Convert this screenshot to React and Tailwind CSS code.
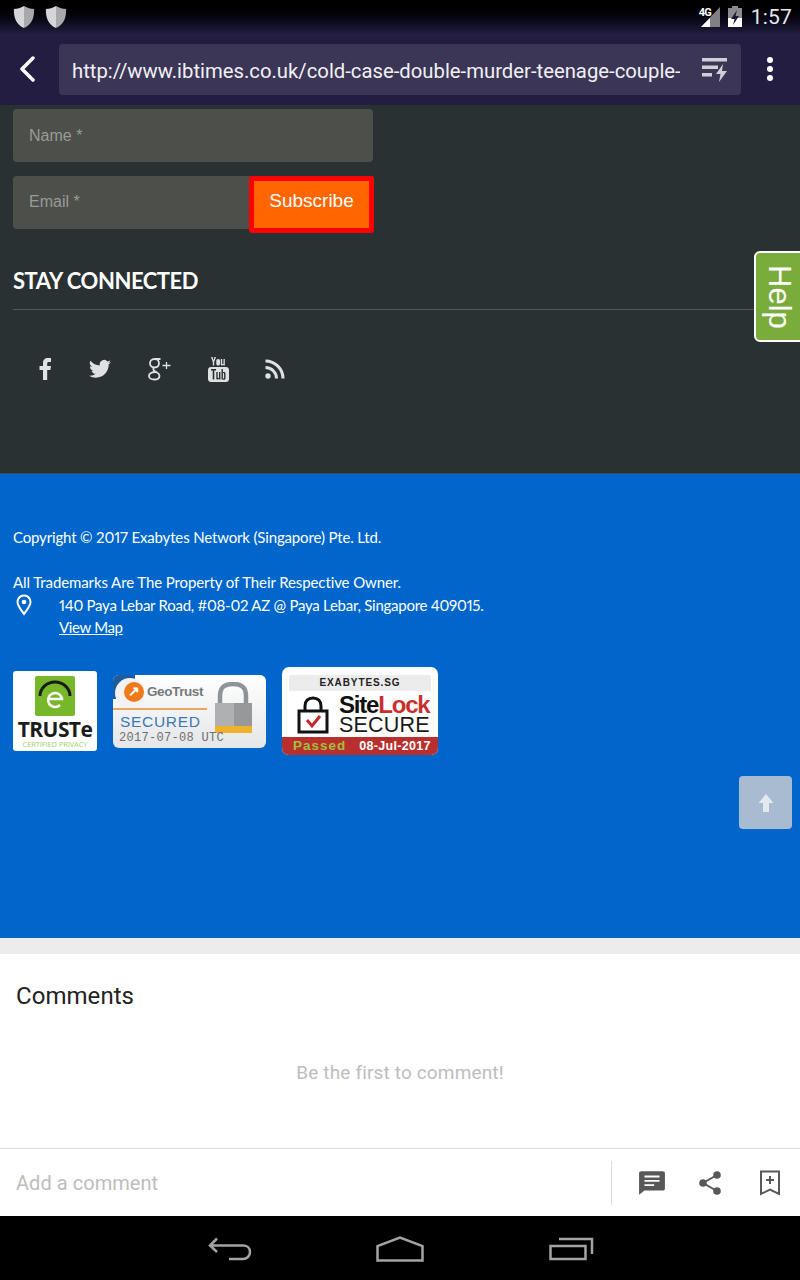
import React from "react";

const Shield = () => (
  <svg width="22" height="24" viewBox="0 0 24 24" preserveAspectRatio="none">
    <path d="M12 1 C8 3 5 4 1 4 C0.500 13 4 20 12 23 Z" fill="#d6d6d8" />
    <path d="M12 1 C16 3 19 4 23 4 C23.500 13 20 20 12 23 Z" fill="#a9a9ad" />
  </svg>
);

const Social = () => (
  <div className="flex items-center h-[40px] ml-[25px] text-[#dfe1e2]">
    <svg width="16" height="24" viewBox="0 0 16 24" className="mr-[35px]">
      <path fill="currentColor" d="M5 23 V13 H1.500 V9 H5 V6 C5 2.500 7 1 9.800 1 H13 V5 H11 C9.500 5 9.200 5.600 9.200 6.800 V9 H13 L12.400 13 H9.200 V23 Z" />
    </svg>
    <svg width="22" height="20" viewBox="0 0 24 20" className="mr-[37px]">
      <path fill="currentColor" d="M24 2.400 a9.800 9.800 0 0 1-2.800.8 4.900 4.900 0 0 0 2.100-2.700 9.800 9.800 0 0 1-3.100 1.200 4.900 4.900 0 0 0-8.400 4.500 A14 14 0 0 1 1.700 1 4.900 4.900 0 0 0 3.200 7.600 4.900 4.900 0 0 1 1 7 a4.900 4.900 0 0 0 3.900 4.800 4.900 4.900 0 0 1-2.200.1 4.900 4.900 0 0 0 4.600 3.400 A9.900 9.900 0 0 1 0 17.300 14 14 0 0 0 7.500 19.500 c9.100 0 14.300-7.700 14-14.600 A10 10 0 0 0 24 2.400 z" />
    </svg>
    <svg width="23" height="24" viewBox="0 0 23 24" className="mr-[37px]">
      <path fill="none" stroke="currentColor" strokeWidth="1.800" d="M12.500 2 H6.500 C3.500 2 2 4.200 2 6.300 C2 8.600 3.800 10.500 6.500 10.500 C9.300 10.500 11 8.600 11 6.300 C11 4.200 9.500 2 7 2 M6 10.500 C4.800 12 5.200 13 6.500 14 C9 15.800 11.500 16.200 11.500 18.700 C11.500 21 9.300 22.500 6.300 22.500 C3.200 22.500 1 21 1 19 C1 16.500 4 15 7.500 15" />
      <path fill="none" stroke="currentColor" strokeWidth="1.300" d="M14.500 8.500 H22.500 M18.500 5 V12" />
    </svg>
    <svg width="21" height="25" viewBox="0 0 21 25" className="mr-[36px]">
      <path fill="currentColor" fillRule="evenodd" d="M3 10 H18 C19.700 10 21 11.300 21 13 V22 C21 23.700 19.700 25 18 25 H3 C1.300 25 0 23.700 0 22 V13 C0 11.300 1.300 10 3 10 Z M3 12 V13.500 H4.700 V22.500 H6.300 V13.500 H8 V12 Z M8.300 15 V21.500 C8.300 22.800 10 22.900 11 21.800 V22.500 H12.400 V15 H11 V20.500 C10.500 21.200 9.700 21.200 9.700 20.500 V15 Z M13.500 12 V22.500 H14.900 C16 23.200 17.500 22.800 17.500 21 V16.500 C17.500 14.800 16 14.500 14.900 15.300 V12 Z M14.900 16.300 C15.500 15.900 16.100 16 16.100 16.800 V20.800 C16.100 21.600 15.500 21.800 14.900 21.400 Z" />
      <path fill="currentColor" d="M3 0 H4.600 L5.500 3.500 L6.400 0 H8 L6.200 5 V8.500 H4.800 V5 Z M10.200 2 C8.900 2 8.300 2.800 8.300 3.800 V6.800 C8.300 7.900 9 8.600 10.200 8.600 C11.400 8.600 12 7.900 12 6.800 V3.800 C12 2.800 11.400 2 10.200 2 Z M12.800 2 V7.300 C12.800 8.800 14.400 8.900 15.500 7.700 V8.500 H16.800 V2 H15.500 V6.700 C15 7.300 14.200 7.300 14.200 6.700 V2 Z" />
    </svg>
    <svg width="20" height="20" viewBox="0 0 20 20">
      <circle cx="3" cy="17" r="2.700" fill="currentColor" />
      <path fill="none" stroke="currentColor" strokeWidth="3" d="M0.500 8.500 A11 11 0 0 1 11.500 19.500" />
      <path fill="none" stroke="currentColor" strokeWidth="3" d="M0.500 2 A17.500 17.500 0 0 1 18 19.500" />
    </svg>
  </div>
);

const Truste = () => (
  <div className="w-[84px] h-[80px] mt-[4px] bg-white rounded-[3px] flex flex-col items-center pt-[5px] overflow-hidden">
    <svg width="40" height="40" viewBox="0 0 40 40" className="shrink-0">
      <rect width="40" height="40" rx="2" fill="#77b82a" />
      <path d="M5 20 A15 14 0 0 1 35 20" fill="none" stroke="#1b1b1b" strokeWidth="3" />
      <path d="M14 23 H27 A7 7 0 1 0 25 29" fill="none" stroke="#fff" strokeWidth="2.500" />
    </svg>
    <div className="font-['Open_Sans'] font-bold text-[21px] leading-[21px] tracking-[-0.6px] text-[#1c1c1c] mt-[3px]">TRUSTe</div>
    <div className="font-['Open_Sans'] text-[7.500px] leading-[9px] text-[#a5cf6a] whitespace-nowrap">CERTIFIED PRIVACY</div>
  </div>
);

const GeoTrust = () => (
  <div className="relative w-[153px] h-[73px] mt-[8px] ml-[16px] bg-gradient-to-b from-[#ffffff] to-[#e4e6e8] rounded-[6px] overflow-hidden">
    <div className="absolute left-0 top-0 w-[22px] h-[24px] bg-[#1f5c9e] rounded-br-[20px]" />
    <div className="absolute left-[2px] top-[3px] w-[30px] h-[30px] rounded-full bg-[#f1f2f3]" />
    <div className="absolute left-[11px] top-[7px] w-[20px] h-[20px] rounded-full bg-[#ef7a1a] text-white text-[14px] leading-[19px] text-center font-bold font-['Liberation_Sans']">↗</div>
    <div className="absolute left-[34px] top-[9px] font-['Liberation_Sans'] font-bold text-[13.500px] leading-[16px] tracking-[-0.4px] text-[#77797c]">GeoTrust</div>
    <div className="absolute left-0 top-[33px] w-[94px] h-[2px] bg-[#f2a45c]" />
    <div className="absolute left-[7px] top-[37px] font-['Liberation_Sans'] text-[15.500px] leading-[19px] tracking-[0.7px] text-[#3d78b4]">SECURED</div>
    <svg width="40" height="52" viewBox="0 0 40 52" className="absolute left-[101px] top-[7px]">
      <path d="M6 24 V14 C6 5 11 2 19 2 C27 2 32 5 32 14 V24" fill="none" stroke="#8f9498" strokeWidth="4.500" />
      <rect x="1" y="21" width="37" height="30" fill="#aeb0b2" />
      <rect x="20" y="21" width="18" height="30" fill="#96989a" />
      <rect x="1" y="44" width="37" height="7" fill="#f0b22c" />
    </svg>
    <div className="absolute left-[6px] top-[56px] font-['Liberation_Mono'] text-[12px] leading-[14px] tracking-[0.3px] text-[#6d6f72] whitespace-nowrap">2017-07-08 UTC</div>
  </div>
);

const SiteLock = () => (
  <div className="relative w-[156px] h-[88px] ml-[16px] bg-white rounded-[7px] overflow-hidden">
    <div className="absolute left-[7px] top-[8px] w-[142px] h-[16px] bg-[#ececec] text-center font-['Liberation_Sans'] font-bold text-[10px] leading-[16px] tracking-[0.9px] text-[#222]">EXABYTES.SG</div>
    <svg width="32" height="38" viewBox="0 0 32 38" className="absolute left-[15px] top-[29px]">
      <path d="M8 15 V10 C8 5 11 2 16 2 C21 2 24 5 24 10 V15" fill="none" stroke="#111" strokeWidth="3" />
      <rect x="2" y="15" width="28" height="21" fill="#fff" stroke="#111" strokeWidth="3" />
      <path d="M10 24 L15 30 L23 20" fill="none" stroke="#c8282c" strokeWidth="3" />
    </svg>
    <div className="absolute left-[57px] top-[27px] font-['Liberation_Sans'] font-bold text-[24px] leading-[22px] tracking-[-1.200px] whitespace-nowrap text-[#111]">Site<span className="text-[#c8302e]">Lock</span></div>
    <div className="absolute left-[57px] top-[49px] font-['Liberation_Sans'] text-[21.500px] leading-[18px] tracking-[0.2px] whitespace-nowrap text-[#1a1a1a]">SECURE</div>
    <div className="absolute left-0 bottom-0 w-full h-[18px] bg-[#b92f2e] flex items-center font-['Liberation_Sans'] font-bold">
      <span className="ml-[11px] text-[13.500px] leading-[18px] tracking-[1px] text-[#9dc23a]">Passed</span>
      <span className="ml-[13px] text-[12.500px] leading-[18px] tracking-[0.3px] text-white">08-Jul-2017</span>
    </div>
  </div>
);

export default function App() {
  return (
    <div className="relative w-[800px] h-[1280px] overflow-hidden flex flex-col font-['Roboto'] bg-white">
      {/* status bar */}
      <div className="h-[33px] shrink-0 bg-gradient-to-b from-[#000000] to-[#1f1b3c] flex items-center pl-[13px] pr-[8px]">
        <Shield />
        <div className="w-[10px]" />
        <Shield />
        <div className="flex-1" />
        <div className="relative w-[22px] h-[22px] mr-[7px]">
          <svg width="22" height="22" viewBox="0 0 22 22" className="absolute left-0 top-0">
            <path d="M21 1 V21 H2 Z" fill="#7f7f84" />
            <path d="M2 21 L11 12 V21 Z" fill="#fff" />
          </svg>
          <span className="absolute left-0 top-[1px] font-['Roboto'] font-bold text-[11px] leading-[12px] tracking-[-0.7px] text-white">4G</span>
        </div>
        <svg width="14" height="22" viewBox="0 0 14 22" className="mr-[9px]">
          <rect x="4" y="0" width="6" height="3" fill="#8a8a8f" />
          <rect x="0" y="2" width="14" height="10" fill="#8a8a8f" />
          <rect x="0" y="12" width="14" height="9" fill="#fff" />
          <path d="M9 4 L3 13 H6.500 L5 19 L11 10 H7.500 Z" fill="#1c1930" />
        </svg>
        <span className="text-[21px] leading-[24px] text-[#e6e6e8] tracking-[0.2px]">1:57</span>
      </div>
      {/* toolbar */}
      <div className="h-[72px] shrink-0 bg-[#231d42] flex items-center">
        <svg width="18" height="26" viewBox="0 0 18 26" className="ml-[18px] mr-[23px]">
          <path d="M15 2 L4 13 L15 24" fill="none" stroke="#fff" strokeWidth="3.500" strokeLinecap="round" strokeLinejoin="round" />
        </svg>
        <div className="w-[682px] h-[51px] bg-[#3b3655] rounded-[4px] flex items-center pl-[13px]">
          <div className="w-[608px] overflow-hidden whitespace-nowrap text-[20.300px] leading-[28px] pt-[3px] text-[#f1f0f4]">http://www.ibtimes.co.uk/cold-case-double-murder-teenage-couple-2</div>
          <svg width="28" height="28" viewBox="0 0 28 28" className="ml-[21px]">
            <rect x="1" y="3" width="25" height="3.500" fill="#d0cfd6" />
            <rect x="1" y="10.500" width="16" height="3.500" fill="#d0cfd6" />
            <rect x="1" y="18" width="10" height="3.500" fill="#d0cfd6" />
            <path d="M22 9 L15 19 H19.500 L18 27 L26 16 H21 Z" fill="#d0cfd6" />
          </svg>
        </div>
        <div className="ml-[26px] flex flex-col gap-[3px]">
          <span className="w-[6px] h-[6px] rounded-full bg-white" />
          <span className="w-[6px] h-[6px] rounded-full bg-white" />
          <span className="w-[6px] h-[6px] rounded-full bg-white" />
        </div>
      </div>
      {/* dark section */}
      <div className="h-[369px] shrink-0 bg-[#2a3132] border-b border-[#3d4a52] pt-[4px] px-[13px] font-['Liberation_Sans']">
        <div className="w-[360px] h-[53px] bg-[#4d4f4b] rounded-[4px] flex items-center pl-[16px] text-[16px] text-[#999b98]">Name *</div>
        <div className="relative w-[361px] h-[53px] mt-[14px] bg-[#4d4f4b] rounded-[4px] flex items-center pl-[16px] pb-[2px] text-[16px] text-[#999b98]">
          Email *
          <div className="absolute left-[236px] top-0 w-[125px] h-[57px] bg-[#ff6600] border-[5px] border-[#ff0000] rounded-[3px] flex items-center justify-center text-[19px] text-white pb-[6px]">Subscribe</div>
        </div>
        <div className="mt-[38px] font-['Lato'] font-bold text-[22px] leading-[28px] tracking-[-0.45px] text-white">STAY CONNECTED</div>
        <div className="h-px mt-[14px] bg-[#53595a] -mr-[13px]" />
        <div className="mt-[39px]">
          <Social />
        </div>
      </div>
      {/* blue section */}
      <div className="h-[464px] shrink-0 bg-[#0066cc] pt-[53px] px-[13px] font-['Lato'] proportional-nums text-[15px] text-white tracking-[-0.1px]">
        <div className="leading-[20px] tracking-[-0.155px]">Copyright © 2017 Exabytes Network (Singapore) Pte. Ltd.</div>
        <div className="leading-[20px] mt-[25px]">All Trademarks Are The Property of Their Respective Owner.</div>
        <div className="flex mt-[3px]">
          <svg width="16" height="22" viewBox="0 0 16 22" className="mr-[27px] -mt-[1px] ml-[3px] shrink-0">
            <path d="M8 1.500 C4 1.500 1.500 4.500 1.500 8 C1.500 12 6 17 8 20 C10 17 14.500 12 14.500 8 C14.500 4.500 12 1.500 8 1.500 Z" fill="none" stroke="#fff" strokeWidth="2" />
            <circle cx="8" cy="8" r="2.300" fill="#fff" />
          </svg>
          <div>
            <div className="leading-[20px] tracking-[-0.26px]">140 Paya Lebar Road, #08-02 AZ @ Paya Lebar, Singapore 409015.</div>
            <div className="leading-[20px] mt-[2px] underline tracking-[-0.35px]">View Map</div>
          </div>
        </div>
        <div className="flex items-start mt-[30px]">
          <Truste />
          <GeoTrust />
          <SiteLock />
        </div>
      </div>
      {/* gray strip */}
      <div className="h-[16px] shrink-0 bg-[#ececec]" />
      {/* comments */}
      <div className="h-[194px] shrink-0 bg-white">
        <div className="pt-[27px] pl-[16px] text-[24px] leading-[30px] tracking-[0.05px] text-[#222]">Comments</div>
        <div className="mt-[49px] text-center text-[19px] leading-[26px] tracking-[0.15px] text-[#bdbdbd]">Be the first to comment!</div>
      </div>
      {/* comment bar */}
      <div className="h-[68px] shrink-0 bg-white border-t border-[#dcdcdc] flex items-center">
        <div className="flex-1 pl-[16px] text-[20px] leading-[26px] tracking-[0.05px] text-[#bdbdbd]">Add a comment</div>
        <div className="w-px h-[44px] bg-[#dcdcdc] mr-[26px]" />
        <svg width="28" height="26" viewBox="0 0 26 24" className="mr-[32px]">
          <path fill="#585858" d="M3 1 H23 C24.200 1 25 1.800 25 3 V17 C25 18.200 24.200 19 23 19 H6 L1 23 V3 C1 1.800 1.800 1 3 1 Z" />
          <path stroke="#fff" strokeWidth="1.800" d="M6 6 H20 M6 10 H20 M6 14 H15" />
        </svg>
        <svg width="24" height="26" viewBox="0 0 24 26" className="mr-[37px]">
          <circle cx="19" cy="5" r="3.800" fill="#585858" />
          <circle cx="5" cy="13" r="3.800" fill="#585858" />
          <circle cx="19" cy="21" r="3.800" fill="#585858" />
          <path stroke="#585858" strokeWidth="2" d="M19 5 L5 13 L19 21" fill="none" />
        </svg>
        <svg width="22" height="26" viewBox="0 0 22 26" className="mr-[19px]">
          <path d="M2 1.500 H20 V24 L11 19.500 L2 24 Z" fill="none" stroke="#585858" strokeWidth="2" />
          <path d="M11 6 V14 M7 10 H15" stroke="#585858" strokeWidth="2" />
        </svg>
      </div>
      {/* android nav */}
      <div className="flex-1 bg-black relative flex items-center">
        <svg width="44" height="24" viewBox="0 0 44 24" className="ml-[208px] mt-[1px]">
          <path d="M9 1.500 L2 8.500 L9 15 M2 8.500 H35 C39 8.500 42 11 42 15 C42 19 39 22 35 22 H21" fill="none" stroke="#a3a3a3" strokeWidth="2.500" />
        </svg>
        <svg width="48" height="26" viewBox="0 0 48 26" className="ml-[124px] mt-[1px]">
          <path d="M1.500 24.500 V10 L24 1.500 L46.500 10 V24.500 Z" fill="none" stroke="#a3a3a3" strokeWidth="2.500" />
        </svg>
        <svg width="46" height="24" viewBox="0 0 46 24" className="ml-[125px] mt-[1px]">
          <rect x="1.500" y="9" width="35" height="13" fill="none" stroke="#a3a3a3" strokeWidth="2.500" />
          <path d="M10 2 H43 V17" fill="none" stroke="#a3a3a3" strokeWidth="2.500" />
        </svg>
      </div>
      {/* overlays */}
      <div className="absolute left-[754px] top-[251px] w-[60px] h-[91px] bg-[#7aac3c] border-2 border-white rounded-[6px] flex items-start">
        <span className="block w-[46px] h-[87px] text-center [writing-mode:vertical-rl] font-['Liberation_Sans'] text-[31px] leading-[46px] text-white">Help</span>
      </div>
      <div className="absolute left-[739px] top-[776px] w-[53px] h-[53px] bg-[#a8bbd0] rounded-[4px] flex items-center justify-center">
        <svg width="16" height="20" viewBox="0 0 16 20">
          <path d="M8 1 L15.500 10 H11 V19 H5 V10 H0.500 Z" fill="#e4e9ef" />
        </svg>
      </div>
    </div>
  );
}
